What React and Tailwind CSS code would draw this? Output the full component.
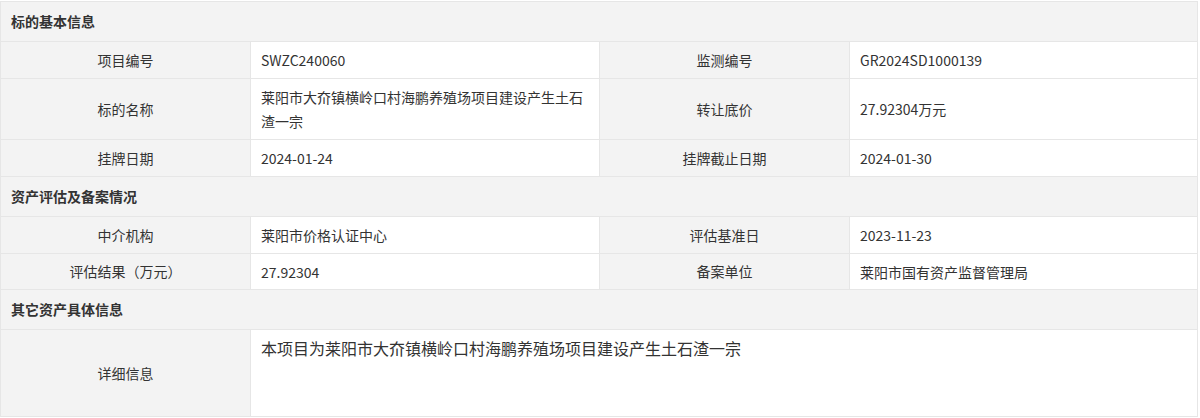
import React from "react";

const sections = [
  {
    title: "标的基本信息",
    rows: [
      { h: "h-[37px]", cells: [["项目编号", "SWZC240060"], ["监测编号", "GR2024SD1000139"]] },
      {
        h: "h-[61px]",
        cells: [
          ["标的名称", "莱阳市大夼镇横岭口村海鹏养殖场项目建设产生土石渣一宗"],
          ["转让底价", "27.92304万元"],
        ],
      },
      { h: "h-[37px]", cells: [["挂牌日期", "2024-01-24"], ["挂牌截止日期", "2024-01-30"]] },
    ],
  },
  {
    title: "资产评估及备案情况",
    rows: [
      { h: "h-[37px]", cells: [["中介机构", "莱阳市价格认证中心"], ["评估基准日", "2023-11-23"]] },
      { h: "h-[36px]", cells: [["评估结果（万元）", "27.92304"], ["备案单位", "莱阳市国有资产监督管理局"]] },
    ],
  },
];

const labelCls = "border border-[#e6e6e6] bg-[#f3f3f3] text-center align-middle";
const valueCls = "border border-[#e6e6e6] bg-white px-[10px] align-middle leading-[24px]";
const headCls = "border border-[#e6e6e6] bg-[#f3f3f3] pl-[10px] text-left font-bold align-middle";

export default function App() {
  return (
    <div
      className="bg-white pt-px text-[14px] text-[#333]"
      style={{ fontFamily: '"Noto Sans CJK SC", "Noto Sans", sans-serif' }}
    >
      <table className="w-[1197px] table-fixed border-collapse">
        <colgroup>
          <col className="w-[250px]" />
          <col className="w-[349px]" />
          <col className="w-[250px]" />
          <col className="w-[348px]" />
        </colgroup>
        <tbody>
          {sections.map((s) => (
            <React.Fragment key={s.title}>
              <tr className="h-[40px]">
                <th colSpan={4} className={headCls}>
                  {s.title}
                </th>
              </tr>
              {s.rows.map((r, i) => (
                <tr key={i} className={r.h}>
                  {r.cells.map(([label, value]) => (
                    <React.Fragment key={label}>
                      <td className={labelCls}>{label}</td>
                      <td className={valueCls}>{value}</td>
                    </React.Fragment>
                  ))}
                </tr>
              ))}
            </React.Fragment>
          ))}
          <tr className="h-[40px]">
            <th colSpan={4} className={headCls}>
              其它资产具体信息
            </th>
          </tr>
          <tr className="h-[87px]">
            <td className={labelCls}>详细信息</td>
            <td colSpan={3} className="border border-[#e6e6e6] bg-white px-[10px] pt-[6px] align-top text-[16px] leading-[24px]">
              本项目为莱阳市大夼镇横岭口村海鹏养殖场项目建设产生土石渣一宗
            </td>
          </tr>
        </tbody>
      </table>
    </div>
  );
}
